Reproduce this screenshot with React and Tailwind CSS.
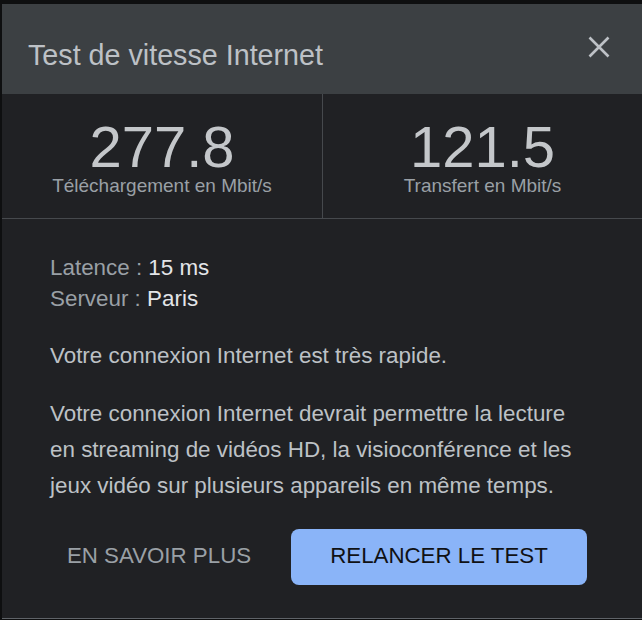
import React from "react";

function CloseIcon() {
  return (
    <svg width="22" height="22" viewBox="0 0 22 22" fill="none">
      <path d="M1.5 1.5 L20.5 20.5 M20.5 1.5 L1.5 20.5" stroke="#bdc1c6" strokeWidth="2.6" strokeLinecap="butt" />
    </svg>
  );
}

function Stat({ value, label, divider }) {
  return (
    <div className={`flex flex-col items-center pt-[27px] ${divider ? "w-[321px] border-r border-[#46494d]" : "flex-1"}`}>
      <div className="text-[58px] leading-[52px] text-[#c4c7ca]">{value}</div>
      <div className="mt-[2px] text-[19px] leading-[21px] text-[#9aa0a6]">{label}</div>
    </div>
  );
}

export default function App() {
  return (
    <div className="w-[642px] h-[620px] bg-[#0e0f10] pt-[4px] pl-[2px] overflow-hidden font-['Liberation_Sans',Arial,sans-serif]">
      <div className="w-[640px] h-[615px] bg-[#202124] border-b border-[#5f6368] flex flex-col">
        {/* header */}
        <div className="h-[90px] bg-[#3c4043] flex items-start justify-between pl-[26px] pr-[32px]">
          <h1 className="pt-[35px] text-[28.7px] leading-[32px] text-[#bdc1c6]">Test de vitesse Internet</h1>
          <button className="mt-[32px]">
            <CloseIcon />
          </button>
        </div>

        {/* results */}
        <div className="h-[125px] flex border-b border-[#46494d]">
          <Stat value="277.8" label="Téléchargement en Mbit/s" divider />
          <Stat value="121.5" label="Transfert en Mbit/s" />
        </div>

        {/* details */}
        <div className="pl-[48px] pt-[33px] text-[22.4px]">
          <div className="leading-[31px]">
            <p className="text-[#9aa0a6]">
              Latence : <span className="text-[#e3e5e8]">15 ms</span>
            </p>
            <p className="text-[#9aa0a6]">
              Serveur : <span className="text-[#e3e5e8]">Paris</span>
            </p>
          </div>
          <p className="mt-[24px] leading-[36px] text-[#bdc1c6]">Votre connexion Internet est très rapide.</p>
          <p className="mt-[22px] w-[535px] leading-[36px] text-[#bdc1c6]">
            Votre connexion Internet devrait permettre la lecture en streaming de vidéos HD, la visioconférence et les jeux vidéo sur plusieurs appareils en même temps.
          </p>
        </div>

        <div className="mt-[25px] pl-[26px] flex items-center gap-[1px]">
          <button className="h-[56px] w-[262px] text-[22.3px] leading-[22px] pb-[2px] text-[#9aa0a6]">EN SAVOIR PLUS</button>
          <button className="h-[56px] w-[296px] rounded-[8px] bg-[#8ab4f8] text-[22.3px] leading-[22px] pb-[2px] text-[#101114]">
            RELANCER LE TEST
          </button>
        </div>
      </div>
    </div>
  );
}
